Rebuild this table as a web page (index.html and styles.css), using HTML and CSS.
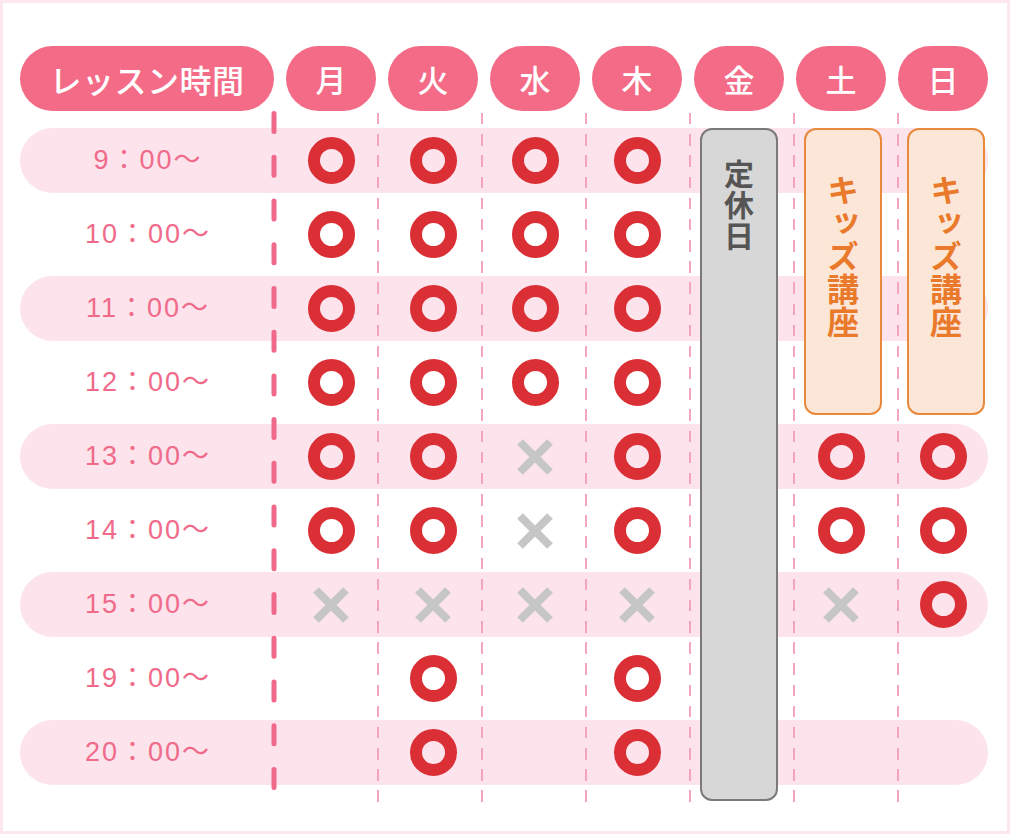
FILE: index.html
```html
<!DOCTYPE html>
<html lang="ja">
<head>
<meta charset="utf-8">
<title>レッスン時間</title>
<link rel="stylesheet" href="styles.css">
</head>
<body>
<div class="frame">
  <div class="head">
    <div class="pill pill-time">レッスン時間</div>
    <div class="pill">月</div>
    <div class="pill">火</div>
    <div class="pill">水</div>
    <div class="pill">木</div>
    <div class="pill">金</div>
    <div class="pill">土</div>
    <div class="pill">日</div>
  </div>

  <div class="body">
    <div class="rows">
      <div class="row band">
        <div class="time">9：00～</div>
        <span class="ok"></span><span class="ok"></span><span class="ok"></span><span class="ok"></span>
        <span></span><span></span><span></span>
      </div>
      <div class="row">
        <div class="time">10：00～</div>
        <span class="ok"></span><span class="ok"></span><span class="ok"></span><span class="ok"></span>
        <span></span><span></span><span></span>
      </div>
      <div class="row band">
        <div class="time">11：00～</div>
        <span class="ok"></span><span class="ok"></span><span class="ok"></span><span class="ok"></span>
        <span></span><span></span><span></span>
      </div>
      <div class="row">
        <div class="time">12：00～</div>
        <span class="ok"></span><span class="ok"></span><span class="ok"></span><span class="ok"></span>
        <span></span><span></span><span></span>
      </div>
      <div class="row band">
        <div class="time">13：00～</div>
        <span class="ok"></span><span class="ok"></span>
        <svg class="ng" viewBox="0 0 38 38"><path d="M4 4L34 34M34 4L4 34"/></svg>
        <span class="ok"></span>
        <span></span><span class="ok"></span><span class="ok"></span>
      </div>
      <div class="row">
        <div class="time">14：00～</div>
        <span class="ok"></span><span class="ok"></span>
        <svg class="ng" viewBox="0 0 38 38"><path d="M4 4L34 34M34 4L4 34"/></svg>
        <span class="ok"></span>
        <span></span><span class="ok"></span><span class="ok"></span>
      </div>
      <div class="row band">
        <div class="time">15：00～</div>
        <svg class="ng" viewBox="0 0 38 38"><path d="M4 4L34 34M34 4L4 34"/></svg>
        <svg class="ng" viewBox="0 0 38 38"><path d="M4 4L34 34M34 4L4 34"/></svg>
        <svg class="ng" viewBox="0 0 38 38"><path d="M4 4L34 34M34 4L4 34"/></svg>
        <svg class="ng" viewBox="0 0 38 38"><path d="M4 4L34 34M34 4L4 34"/></svg>
        <span></span>
        <svg class="ng" viewBox="0 0 38 38"><path d="M4 4L34 34M34 4L4 34"/></svg>
        <span class="ok"></span>
      </div>
      <div class="row">
        <div class="time">19：00～</div>
        <span></span><span class="ok"></span><span></span><span class="ok"></span>
        <span></span><span></span><span></span>
      </div>
      <div class="row band">
        <div class="time">20：00～</div>
        <span></span><span class="ok"></span><span></span><span class="ok"></span>
        <span></span><span></span><span></span>
      </div>
    </div>

    <svg class="sep-main" width="6" height="679" viewBox="0 0 6 679"><line x1="3" y1="2.5" x2="3" y2="676.5"/></svg>
    <div class="seps">
      <i></i><i></i><i></i><i></i><i></i><i></i>
    </div>

    <div class="closed"><span class="vtext">定休日</span></div>
    <div class="kids kids-sat"><span class="vtext">キッズ講座</span></div>
    <div class="kids kids-sun"><span class="vtext">キッズ講座</span></div>
  </div>
</div>
</body>
</html>
```

FILE: styles.css
```css
* { box-sizing: border-box; }

html, body {
  margin: 0;
  padding: 0;
  background: #ffffff;
}

body {
  font-family: "Noto Sans CJK JP", "Noto Sans", sans-serif;
}

.frame {
  width: 1010px;
  height: 834px;
  border: 3px solid #fde6ee;
  background: #ffffff;
  padding: 43px 0 0 17px;
}

.head,
.row {
  display: grid;
  grid-template-columns: 254px repeat(7, 90px);
  column-gap: 12px;
  width: 968px;
}

.head {
  height: 65px;
}

.pill {
  background: #f46b87;
  border-radius: 33px;
  color: #ffffff;
  display: flex;
  align-items: center;
  justify-content: center;
  font-size: 31px;
  font-weight: 500;
  line-height: 1;
}

.pill-time {
  font-size: 32px;
  letter-spacing: 0.5px;
}

.body {
  position: relative;
  margin-top: 17px;
}

.rows {
  display: flex;
  flex-direction: column;
  gap: 9px;
}

.row {
  height: 65px;
  align-items: center;
  justify-items: center;
  border-radius: 33px;
}

.row.band {
  background: #fce3ec;
}

.time {
  color: #f06a8a;
  font-family: "Liberation Sans", "Noto Sans CJK JP", sans-serif;
  font-size: 27px;
  letter-spacing: 2px;
  line-height: 1;
  font-weight: 400;
  padding-left: 2px;
}

.ok {
  display: block;
  width: 47px;
  height: 47px;
  border: 12px solid #db2f36;
  border-radius: 50%;
}

.ng {
  width: 38px;
  height: 38px;
  fill: none;
  stroke: #c6c6c6;
  stroke-width: 8;
}

.sep-main {
  position: absolute;
  left: 251px;
  top: -17px;
}

.sep-main line {
  stroke: #f1698a;
  stroke-width: 5;
  stroke-linecap: round;
  stroke-dasharray: 18 25.73;
}

.seps {
  position: absolute;
  left: 357px;
  top: -15px;
  height: 689px;
  display: flex;
  gap: 102px;
}

.seps i {
  display: block;
  width: 2px;
  height: 100%;
  background: repeating-linear-gradient(to bottom, #f5a6bf 0 11.5px, transparent 11.5px 21.17px);
}

.closed,
.kids {
  position: absolute;
  top: 0;
  width: 78px;
  border-radius: 12px;
  display: flex;
  justify-content: center;
}

.closed {
  left: 680px;
  height: 673px;
  background: #d7d7d7;
  border: 2px solid #7a7a7a;
  padding-top: 29px;
  color: #555555;
  font-size: 30px;
}

.kids {
  height: 287px;
  background: #fce6d8;
  border: 2px solid #e8893b;
  padding-top: 44px;
  color: #ea7a2b;
  font-size: 32px;
}

.kids-sat { left: 784px; }
.kids-sun { left: 887px; }

.vtext {
  writing-mode: vertical-rl;
  font-weight: 700;
  line-height: 1;
  letter-spacing: 1px;
}
```
